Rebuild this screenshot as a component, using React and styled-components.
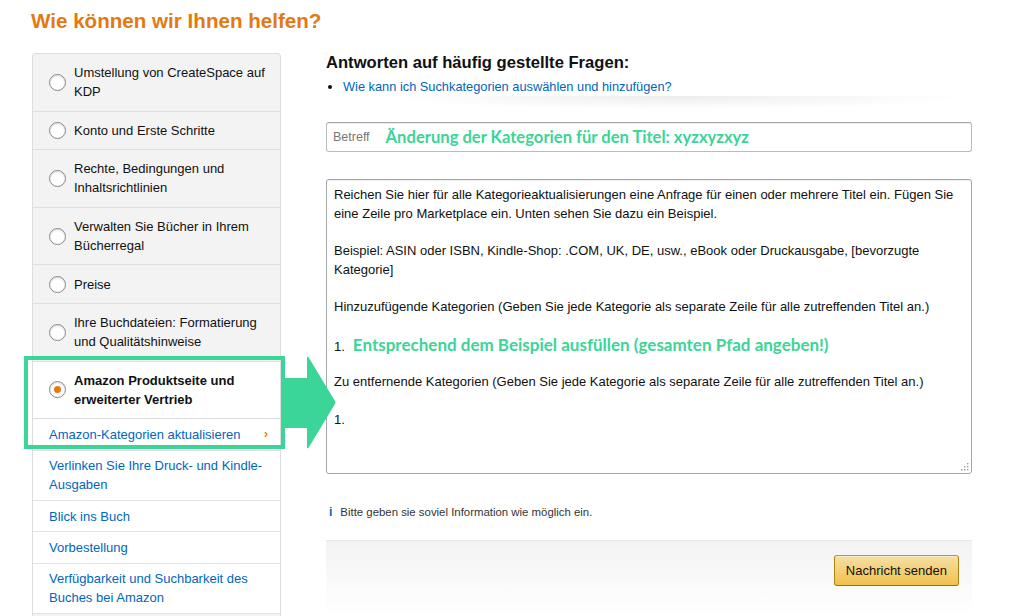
import styled, { createGlobalStyle } from "styled-components";

const GlobalStyle = createGlobalStyle`
  html, body {
    margin: 0;
    padding: 0;
    background: #fff;
    font-family: "Liberation Sans", Arial, sans-serif;
    color: #111;
    overflow: hidden;
  }
`;

const Page = styled.div`
  width: 1024px;
  height: 616px;
  padding: 8px 0 0 31px;
  box-sizing: border-box;
  overflow: hidden;
`;

const Title = styled.h1`
  margin: 0;
  font-size: 20.6px;
  line-height: 26px;
  font-weight: 700;
  color: #e47911;
`;

const Columns = styled.div`
  position: relative;
  display: flex;
  gap: 45px;
  margin-top: 19px;
  padding-left: 1px;
`;

const Sidebar = styled.ul`
  list-style: none;
  margin: 0;
  padding: 0;
  width: 249px;
  box-sizing: border-box;
  flex: none;
  border: 1px solid #ddd;
  border-bottom: none;
  border-radius: 4px 4px 0 0;
  background: #f3f3f3;
  font-size: 13px;
  line-height: 19px;
`;

const Topic = styled.li`
  display: flex;
  align-items: center;
  gap: 8px;
  padding: 9.3px 10px 9.3px 16px;
  border-bottom: 1px solid #dedede;
  background: ${p => (p.$active ? "#fff" : "transparent")};
  font-weight: ${p => (p.$active ? 700 : 400)};
`;

const Radio = styled.span`
  flex: none;
  width: 15px;
  height: 15px;
  border: 1px solid #888;
  border-radius: 50%;
  background: #fff;
  box-shadow: inset 0 1px 2px rgba(0, 0, 0, 0.15);
  display: flex;
  align-items: center;
  justify-content: center;
  &::after {
    content: "";
    display: ${p => (p.$checked ? "block" : "none")};
    width: 7px;
    height: 7px;
    border-radius: 50%;
    background: #e47911;
  }
`;

const SubLink = styled.li`
  display: flex;
  align-items: center;
  justify-content: space-between;
  padding: 5.7px 12px 5.7px 16px;
  border-bottom: 1px solid #e3e3e3;
  background: #fff;
  color: #0066c0;
`;

const Chevron = styled.span`
  color: #e47911;
  font-weight: 700;
  font-size: 12px;
`;

const Main = styled.div`
  width: 646px;
  flex: none;
`;

const FaqHeading = styled.h2`
  margin: 0;
  font-size: 16.6px;
  line-height: 20px;
  font-weight: 700;
  color: #111;
`;

const FaqList = styled.ul`
  margin: 4px 0 0;
  padding: 0 0 0 17px;
  font-size: 12.8px;
  line-height: 19px;
  color: #0066c0;
  li::marker {
    color: #111;
  }
`;

const Divider = styled.div`
  height: 14px;
  margin: 0 0 12px 60px;
  background: radial-gradient(ellipse at 50% 0%, rgba(0, 0, 0, 0.07), rgba(0, 0, 0, 0) 70%);
`;

const SubjectBox = styled.div`
  display: flex;
  align-items: center;
  gap: 16px;
  height: 28px;
  padding: 0 6px;
  border: 1px solid #bbb;
  border-top-color: #a6a6a6;
  border-radius: 3px;
  box-shadow: inset 0 1px 0 rgba(0, 0, 0, 0.07);
`;

const Placeholder = styled.span`
  font-size: 12.5px;
  color: #777;
`;

const Annotation = styled.span`
  font-family: Lato, "Open Sans", sans-serif;
  font-weight: 700;
  font-size: ${p => p.$size || 16}px;
  margin-left: ${p => p.$indent || 0}px;
  color: #3bd597;
`;

const MessageBox = styled.div`
  position: relative;
  margin-top: 27px;
  height: 295px;
  padding: 6px 7px;
  box-sizing: border-box;
  border: 1px solid #a6a6a6;
  border-radius: 3px;
  box-shadow: inset 0 1px 0 rgba(0, 0, 0, 0.07);
  font-size: 13px;
  line-height: 18.7px;
  color: #111;
`;

const Para = styled.p`
  margin: 0 0 ${p => p.$gap || 18.7}px;
  line-height: ${p => p.$lh || 18.7}px;
`;

const Grip = styled.svg`
  position: absolute;
  right: 2px;
  bottom: 2px;
`;

const InfoLine = styled.div`
  display: flex;
  align-items: center;
  gap: 8px;
  margin: 30px 0 0 3px;
  font-size: 11.4px;
  line-height: 16px;
  color: #333;
`;

const InfoIcon = styled.span`
  color: #0066c0;
  font-weight: 700;
  font-size: 12px;
`;

const Footer = styled.div`
  margin-top: 20px;
  height: 80px;
  padding: 14px 13px 0 0;
  border-top: 1px solid #e7e7e7;
  background: linear-gradient(#f3f3f3, #fff 80%);
  display: flex;
  justify-content: flex-end;
  align-items: flex-start;
`;

const SendButton = styled.button`
  height: 31px;
  padding: 0 11px;
  border: 1px solid;
  border-color: #c89411 #b0820f #99710d;
  border-radius: 3px;
  background: linear-gradient(#f7dfa5, #f0c14b);
  box-shadow: inset 0 1px 0 rgba(255, 255, 255, 0.4);
  font-family: "Liberation Sans", Arial, sans-serif;
  font-size: 13px;
  color: #111;
`;

const Highlight = styled.div`
  position: absolute;
  left: -7px;
  top: 303px;
  width: 261px;
  height: 93px;
  box-sizing: border-box;
  border: 4px solid #3bd597;
  pointer-events: none;
`;

const Arrow = styled.svg`
  position: absolute;
  left: 254px;
  top: 303px;
  pointer-events: none;
`;

const topics = [
  "Umstellung von CreateSpace auf KDP",
  "Konto und Erste Schritte",
  "Rechte, Bedingungen und Inhaltsrichtlinien",
  "Verwalten Sie Bücher in Ihrem Bücherregal",
  "Preise",
  "Ihre Buchdateien: Formatierung und Qualitätshinweise",
];

const links = [
  "Verlinken Sie Ihre Druck- und Kindle-Ausgaben",
  "Blick ins Buch",
  "Vorbestellung",
  "Verfügbarkeit und Suchbarkeit des Buches bei Amazon",
];

export default function App() {
  return (
    <>
      <GlobalStyle />
      <Page>
        <Title>Wie können wir Ihnen helfen?</Title>
        <Columns>
          <Sidebar>
            {topics.map(t => (
              <Topic key={t}>
                <Radio />
                <span>{t}</span>
              </Topic>
            ))}
            <Topic $active>
              <Radio $checked />
              <span>Amazon Produktseite und erweiterter Vertrieb</span>
            </Topic>
            <SubLink>
              <span>Amazon-Kategorien aktualisieren</span>
              <Chevron>›</Chevron>
            </SubLink>
            {links.map(l => (
              <SubLink key={l}>
                <span>{l}</span>
              </SubLink>
            ))}
          </Sidebar>

          <Main>
            <FaqHeading>Antworten auf häufig gestellte Fragen:</FaqHeading>
            <FaqList>
              <li>Wie kann ich Suchkategorien auswählen und hinzufügen?</li>
            </FaqList>
            <Divider />
            <SubjectBox>
              <Placeholder>Betreff</Placeholder>
              <Annotation $size={16.6}>Änderung der Kategorien für den Titel: xyzxyzxyz</Annotation>
            </SubjectBox>
            <MessageBox>
              <Para>
                Reichen Sie hier für alle Kategorieaktualisierungen eine Anfrage für einen oder mehrere Titel ein.
                Fügen Sie eine Zeile pro Marketplace ein. Unten sehen Sie dazu ein Beispiel.
              </Para>
              <Para>
                Beispiel: ASIN oder ISBN, Kindle-Shop: .COM, UK, DE, usw., eBook oder Druckausgabe, [bevorzugte
                Kategorie]
              </Para>
              <Para>
                Hinzuzufügende Kategorien (Geben Sie jede Kategorie als separate Zeile für alle zutreffenden Titel an.)
              </Para>
              <Para $gap={17}>
                1.<Annotation $size={17} $indent={8}>Entsprechend dem Beispiel ausfüllen (gesamten Pfad angeben!)</Annotation>
              </Para>
              <Para>
                Zu entfernende Kategorien (Geben Sie jede Kategorie als separate Zeile für alle zutreffenden Titel an.)
              </Para>
              <Para>1.</Para>
              <Grip width="9" height="9" viewBox="0 0 9 9">
                <g fill="#999">
                  <rect x="7" y="1" width="1.4" height="1.4" />
                  <rect x="4" y="4" width="1.4" height="1.4" />
                  <rect x="7" y="4" width="1.4" height="1.4" />
                  <rect x="1" y="7" width="1.4" height="1.4" />
                  <rect x="4" y="7" width="1.4" height="1.4" />
                  <rect x="7" y="7" width="1.4" height="1.4" />
                </g>
              </Grip>
            </MessageBox>
            <InfoLine>
              <InfoIcon>i</InfoIcon>
              <span>Bitte geben sie soviel Information wie möglich ein.</span>
            </InfoLine>
            <Footer>
              <SendButton>Nachricht senden</SendButton>
            </Footer>
          </Main>

          <Highlight />
          <Arrow width="52" height="93" viewBox="0 0 52 93">
            <path d="M0 22 H22 V1 Q23 0 24 2 L50 45 Q51 46.5 50 48 L24 91 Q23 93 22 92 V72 H0 Z" fill="#3bd597" />
          </Arrow>
        </Columns>
      </Page>
    </>
  );
}
